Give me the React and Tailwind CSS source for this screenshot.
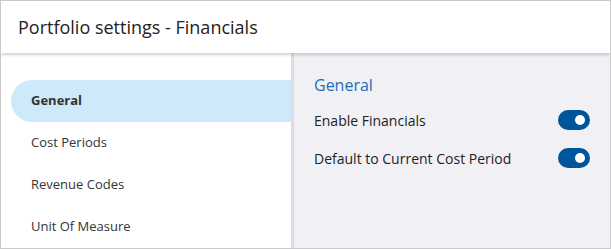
import React from 'react'

const navItems = ['General', 'Cost Periods', 'Revenue Codes', 'Unit Of Measure']

const Toggle = () => (
  <div className="w-[32px] h-[20px] rounded-full bg-[#00559a] flex items-center justify-end pr-[5px]">
    <div className="w-[10px] h-[10px] rounded-full bg-white" />
  </div>
)

export default function App() {
  return (
    <div
      className="w-[611px] h-[249px] border border-[#c9c9cc] bg-white flex flex-col overflow-hidden"
      style={{ fontFamily: '"Open Sans", sans-serif' }}
    >
      {/* Header */}
      <div className="h-[52px] shrink-0 flex items-center pl-[17px] bg-white shadow-[0_2px_3px_rgba(0,0,0,0.18)] relative z-10">
        <h1 className="text-[18px] text-[#222] leading-none">Portfolio settings - Financials</h1>
      </div>

      <div className="flex flex-1 min-h-0">
        {/* Sidebar */}
        <div className="w-[290px] shrink-0 bg-white pt-[27px] pl-[10px]">
          {navItems.map((item, i) => (
            <div
              key={item}
              className={`h-[42px] flex items-center pl-[20px] text-[13px] ${
                i === 0
                  ? 'bg-[#cde9fa] rounded-l-full font-bold text-[#333]'
                  : 'text-[#333]'
              }`}
            >
              {item}
            </div>
          ))}
        </div>

        {/* Content */}
        <div className="flex-1 bg-[#f1f1f5] border-l-[3px] border-[#dcdce2] pl-[20px] pr-[20px] pt-[21px]">
          <h2 className="text-[16px] text-[#1b6db4] leading-[22px]">General</h2>
          <div className="mt-[14px] flex items-center justify-between h-[20px]">
            <span className="text-[14px] text-[#222]">Enable Financials</span>
            <Toggle />
          </div>
          <div className="mt-[18px] flex items-center justify-between h-[20px]">
            <span className="text-[14px] text-[#222]">Default to Current Cost Period</span>
            <Toggle />
          </div>
        </div>
      </div>
    </div>
  )
}
